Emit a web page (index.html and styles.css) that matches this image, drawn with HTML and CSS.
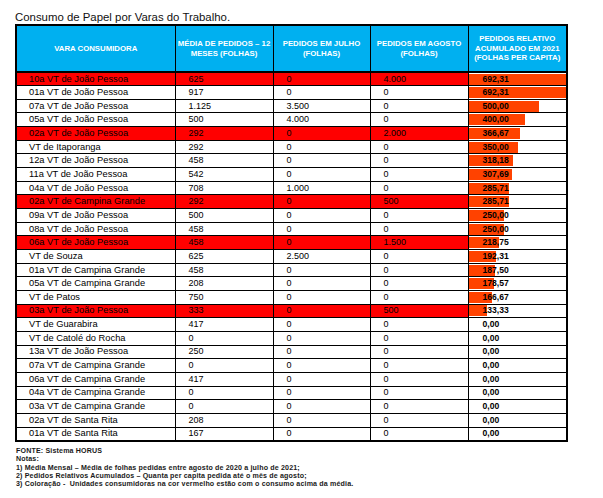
FILE: index.html
```html
<!DOCTYPE html>
<html lang="pt-BR">
<head>
<meta charset="utf-8">
<title>Consumo de Papel por Varas do Trabalho</title>
<link rel="stylesheet" href="styles.css">
</head>
<body>
<div class="page">
  <h1 class="title">Consumo de Papel por Varas do Trabalho.</h1>
  <table class="grid">
    <colgroup>
      <col class="c-vara"><col class="c-num"><col class="c-num2"><col class="c-num"><col class="c-cap">
    </colgroup>
    <thead>
      <tr>
        <th>VARA CONSUMIDORA</th>
        <th>MÉDIA DE PEDIDOS – 12<br>MESES (FOLHAS)</th>
        <th>PEDIDOS EM JULHO<br>(FOLHAS)</th>
        <th>PEDIDOS EM AGOSTO<br>(FOLHAS)</th>
        <th>PEDIDOS RELATIVO<br>ACUMULADO EM 2021<br>(FOLHAS PER CAPITA)</th>
      </tr>
    </thead>
    <tbody>
      <tr class="hot"><td>10a VT de João Pessoa</td><td>625</td><td>0</td><td>4.000</td><td class="cap"><div class="cw"><span class="bar" style="width:100%"></span><span class="val">692,31</span></div></td></tr>
      <tr><td>01a VT de João Pessoa</td><td>917</td><td>0</td><td>0</td><td class="cap"><div class="cw"><span class="bar" style="width:100%"></span><span class="val">692,31</span></div></td></tr>
      <tr><td>07a VT de João Pessoa</td><td>1.125</td><td>3.500</td><td>0</td><td class="cap"><div class="cw"><span class="bar" style="width:72.22%"></span><span class="val">500,00</span></div></td></tr>
      <tr><td>05a VT de João Pessoa</td><td>500</td><td>4.000</td><td>0</td><td class="cap"><div class="cw"><span class="bar" style="width:57.78%"></span><span class="val">400,00</span></div></td></tr>
      <tr class="hot"><td>02a VT de João Pessoa</td><td>292</td><td>0</td><td>2.000</td><td class="cap"><div class="cw"><span class="bar" style="width:52.96%"></span><span class="val">366,67</span></div></td></tr>
      <tr><td>VT de Itaporanga</td><td>292</td><td>0</td><td>0</td><td class="cap"><div class="cw"><span class="bar" style="width:50.56%"></span><span class="val">350,00</span></div></td></tr>
      <tr><td>12a VT de João Pessoa</td><td>458</td><td>0</td><td>0</td><td class="cap"><div class="cw"><span class="bar" style="width:45.96%"></span><span class="val">318,18</span></div></td></tr>
      <tr><td>11a VT de João Pessoa</td><td>542</td><td>0</td><td>0</td><td class="cap"><div class="cw"><span class="bar" style="width:44.44%"></span><span class="val">307,69</span></div></td></tr>
      <tr><td>04a VT de João Pessoa</td><td>708</td><td>1.000</td><td>0</td><td class="cap"><div class="cw"><span class="bar" style="width:41.27%"></span><span class="val">285,71</span></div></td></tr>
      <tr class="hot"><td>02a VT de Campina Grande</td><td>292</td><td>0</td><td>500</td><td class="cap"><div class="cw"><span class="bar" style="width:41.27%"></span><span class="val">285,71</span></div></td></tr>
      <tr><td>09a VT de João Pessoa</td><td>500</td><td>0</td><td>0</td><td class="cap"><div class="cw"><span class="bar" style="width:36.11%"></span><span class="val">250,00</span></div></td></tr>
      <tr><td>08a VT de João Pessoa</td><td>458</td><td>0</td><td>0</td><td class="cap"><div class="cw"><span class="bar" style="width:36.11%"></span><span class="val">250,00</span></div></td></tr>
      <tr class="hot"><td>06a VT de João Pessoa</td><td>458</td><td>0</td><td>1.500</td><td class="cap"><div class="cw"><span class="bar" style="width:31.6%"></span><span class="val">218,75</span></div></td></tr>
      <tr><td>VT de Souza</td><td>625</td><td>2.500</td><td>0</td><td class="cap"><div class="cw"><span class="bar" style="width:27.78%"></span><span class="val">192,31</span></div></td></tr>
      <tr><td>01a VT de Campina Grande</td><td>458</td><td>0</td><td>0</td><td class="cap"><div class="cw"><span class="bar" style="width:27.08%"></span><span class="val">187,50</span></div></td></tr>
      <tr><td>05a VT de Campina Grande</td><td>208</td><td>0</td><td>0</td><td class="cap"><div class="cw"><span class="bar" style="width:25.79%"></span><span class="val">178,57</span></div></td></tr>
      <tr><td>VT de Patos</td><td>750</td><td>0</td><td>0</td><td class="cap"><div class="cw"><span class="bar" style="width:24.07%"></span><span class="val">166,67</span></div></td></tr>
      <tr class="hot"><td>03a VT de João Pessoa</td><td>333</td><td>0</td><td>500</td><td class="cap"><div class="cw"><span class="bar" style="width:19.26%"></span><span class="val">133,33</span></div></td></tr>
      <tr><td>VT de Guarabira</td><td>417</td><td>0</td><td>0</td><td class="cap"><div class="cw"><span class="val">0,00</span></div></td></tr>
      <tr><td>VT de Catolé do Rocha</td><td>0</td><td>0</td><td>0</td><td class="cap"><div class="cw"><span class="val">0,00</span></div></td></tr>
      <tr><td>13a VT de João Pessoa</td><td>250</td><td>0</td><td>0</td><td class="cap"><div class="cw"><span class="val">0,00</span></div></td></tr>
      <tr><td>07a VT de Campina Grande</td><td>0</td><td>0</td><td>0</td><td class="cap"><div class="cw"><span class="val">0,00</span></div></td></tr>
      <tr><td>06a VT de Campina Grande</td><td>417</td><td>0</td><td>0</td><td class="cap"><div class="cw"><span class="val">0,00</span></div></td></tr>
      <tr><td>04a VT de Campina Grande</td><td>0</td><td>0</td><td>0</td><td class="cap"><div class="cw"><span class="val">0,00</span></div></td></tr>
      <tr><td>03a VT de Campina Grande</td><td>0</td><td>0</td><td>0</td><td class="cap"><div class="cw"><span class="val">0,00</span></div></td></tr>
      <tr><td>02a VT de Santa Rita</td><td>208</td><td>0</td><td>0</td><td class="cap"><div class="cw"><span class="val">0,00</span></div></td></tr>
      <tr><td>01a VT de Santa Rita</td><td>167</td><td>0</td><td>0</td><td class="cap"><div class="cw"><span class="val">0,00</span></div></td></tr>
    </tbody>
  </table>
  <div class="notes">
    <p>FONTE: Sistema HORUS</p>
    <p>Notas:</p>
    <p>1) Média Mensal – Média de folhas pedidas entre agosto de 2020 a julho de 2021;</p>
    <p>2) Pedidos Relativos Acumulados – Quanta per capita pedida até o mês de agosto;</p>
    <p>3) Coloração -&nbsp; Unidades consumidoras na cor vermelho estão com o consumo acima da média.</p>
  </div>
</div>
</body>
</html>
```

FILE: styles.css
```css
* { box-sizing: border-box; }
html, body { margin: 0; padding: 0; background: #fff; }
body { font-family: "Liberation Sans", Arial, sans-serif; color: #000; }

.page { padding: 11px 0 0 15px; }

.title {
  margin: 0;
  font-size: 11.4px;
  font-weight: normal;
  line-height: 13px;
  color: #111;
}

.grid {
  border-collapse: collapse;
  table-layout: fixed;
  width: 551px;
  border: 2px solid #000;
}
.c-vara { width: 159px; }
.c-num { width: 98px; }
.c-num2 { width: 97px; }
.c-cap { width: 99px; }

.grid th {
  height: 47px;
  background: #00b0f0;
  color: #fff;
  font-size: 7.8px;
  font-weight: bold;
  line-height: 9.6px;
  text-align: center;
  vertical-align: middle;
  border: 1px solid #000;
  border-bottom: 2px solid #000;
  padding: 0 1px;
}

.grid td {
  height: 13.67px;
  padding: 0 0 0 13px;
  border: 1px solid #000;
  font-size: 9px;
  line-height: 11px;
  vertical-align: middle;
  white-space: nowrap;
  overflow: hidden;
}
.grid td:first-child { padding-left: 12px; font-size: 9.3px; }

.hot td { background: #ff0000; }
.hot td.cap { background: #fff; }

.grid td.cap { padding: 0; }
.cw {
  display: grid;
  height: 11px;
}
.bar {
  grid-area: 1 / 1;
  height: 11px;
  background: #ff4200;
}
.val {
  grid-area: 1 / 1;
  padding-left: 14px;
  font-weight: bold;
  font-size: 8.6px;
  line-height: 11px;
}

.notes {
  margin-top: 5px;
  padding-left: 1px;
  font-size: 7.1px;
  font-weight: bold;
  letter-spacing: 0.15px;
  line-height: 8.4px;
  color: #1a1a1a;
}
.notes p { margin: 0; }
```
